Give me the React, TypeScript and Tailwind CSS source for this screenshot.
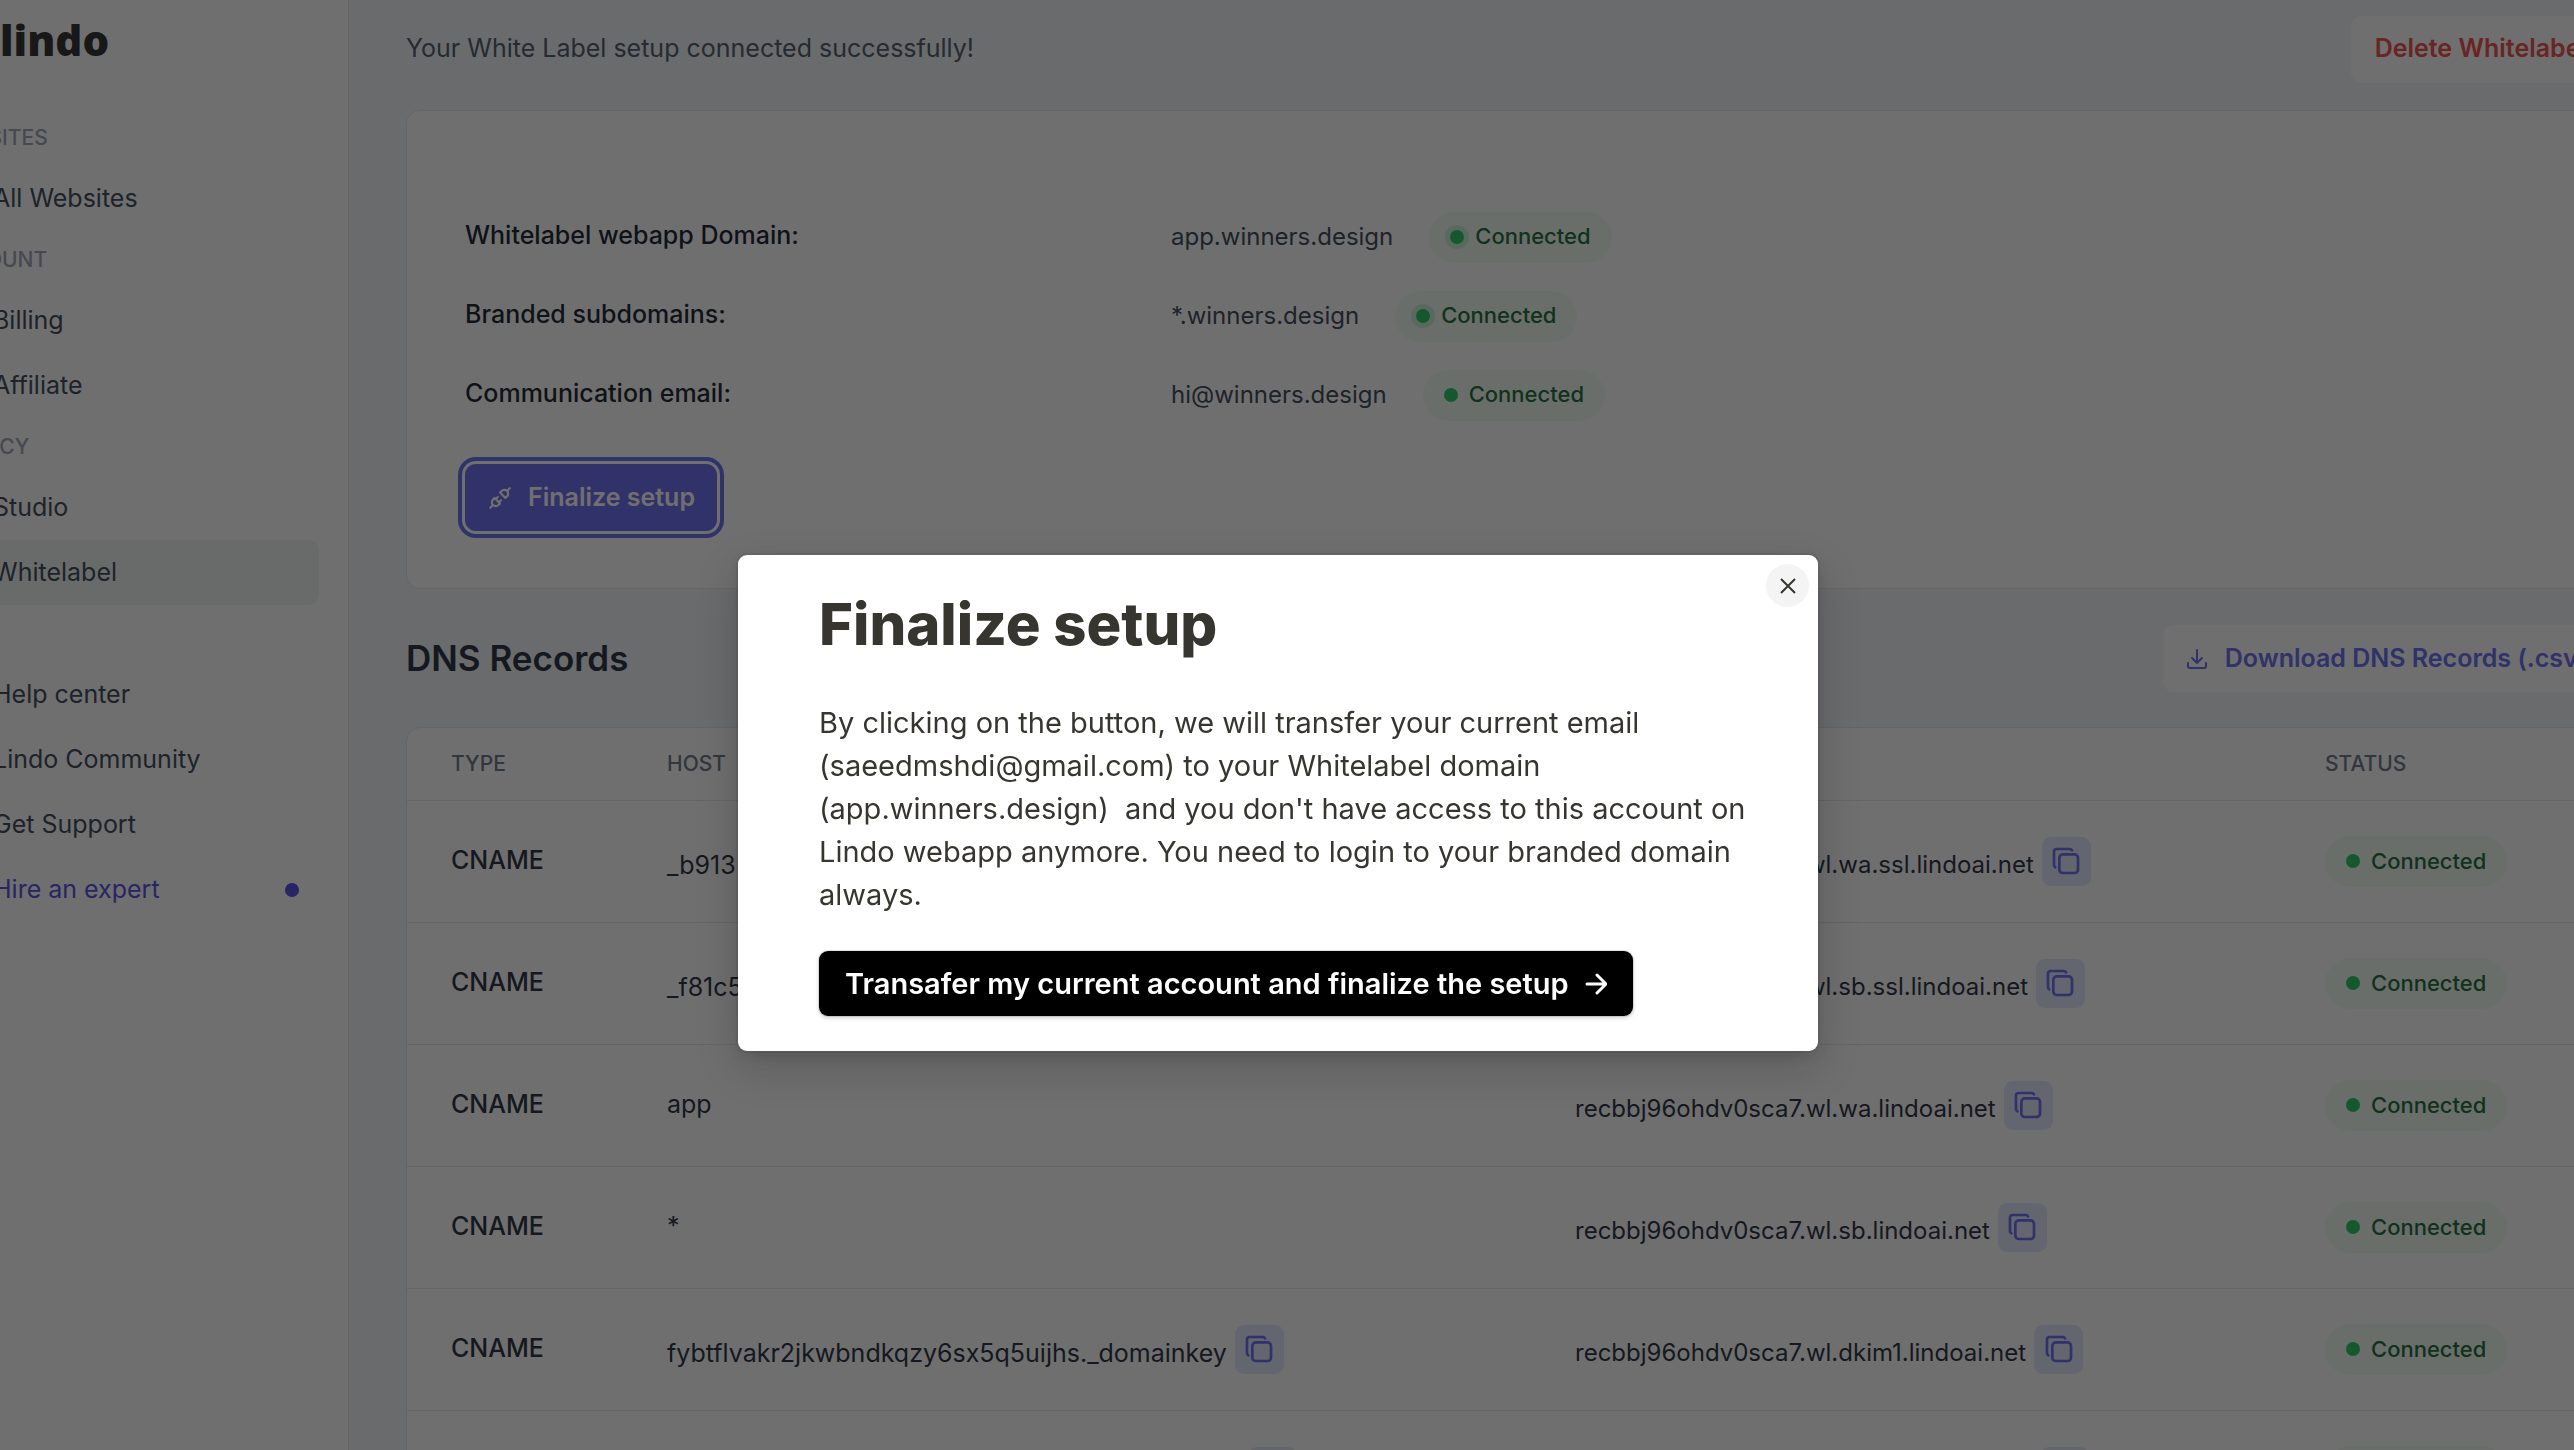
import { TbCopy, TbPlugConnected } from "react-icons/tb";

type NavItem = {
  label: string;
  active?: boolean;
  highlight?: boolean;
};

type NavGroup = {
  title?: string;
  items: NavItem[];
};

type DnsRecord = {
  type: string;
  host: string;
  value: string;
  copyHost?: boolean;
};

const navGroups: NavGroup[] = [
  { title: "Websites", items: [{ label: "All Websites" }] },
  { title: "Account", items: [{ label: "Billing" }, { label: "Affiliate" }] },
  {
    title: "Agency",
    items: [{ label: "Studio" }, { label: "Whitelabel", active: true }],
  },
  {
    items: [
      { label: "Help center" },
      { label: "Lindo Community" },
      { label: "Get Support" },
      { label: "Hire an expert", highlight: true },
    ],
  },
];

const domains = [
  { label: "Whitelabel webapp Domain:", value: "app.winners.design", pulse: true },
  { label: "Branded subdomains:", value: "*.winners.design", pulse: true },
  { label: "Communication email:", value: "hi@winners.design", pulse: false },
];

const records: DnsRecord[] = [
  {
    type: "CNAME",
    host: "_b913",
    value: "recbbj96ohdv0sca7.wl.wa.ssl.lindoai.net",
    copyHost: true,
  },
  {
    type: "CNAME",
    host: "_f81c5",
    value: "recbbj96ohdv0sca7.wl.sb.ssl.lindoai.net",
    copyHost: true,
  },
  { type: "CNAME", host: "app", value: "recbbj96ohdv0sca7.wl.wa.lindoai.net" },
  { type: "CNAME", host: "*", value: "recbbj96ohdv0sca7.wl.sb.lindoai.net" },
  {
    type: "CNAME",
    host: "fybtflvakr2jkwbndkqzy6sx5q5uijhs._domainkey",
    value: "recbbj96ohdv0sca7.wl.dkim1.lindoai.net",
    copyHost: true,
  },
  {
    type: "CNAME",
    host: "hw4btqzn2xkdcg6yoev3ap5rm7qhs._domainkey",
    value: "recbbj96ohdv0sca7.wl.dkim2.lindoai.net",
    copyHost: true,
  },
];

function StatusBadge({ pulse = false }: { pulse?: boolean }) {
  return (
    <span className="inline-flex h-[51px] items-center gap-[11px] rounded-full bg-[#f0fdf4] px-[21px] align-middle text-[22px] font-medium text-[#166534]">
      <span
        className={`size-[14px] rounded-full bg-[#22c55e] ${
          pulse ? "ring-[5px] ring-[#22c55e]/20" : ""
        }`}
      />
      Connected
    </span>
  );
}

function CopyCell({ text }: { text: string }) {
  return (
    <div className="flex items-end gap-2 leading-[42px]">
      {text}
      <button
        type="button"
        aria-label={`Copy ${text}`}
        className="flex size-[49px] items-center justify-center rounded-[9px] bg-[#e0e7ff] text-[#6366f1]"
      >
        <TbCopy className="size-8" />
      </button>
    </div>
  );
}

function DownloadIcon() {
  return (
    <svg
      viewBox="0 0 20 20"
      className="size-5"
      fill="none"
      stroke="currentColor"
      strokeWidth="2"
      strokeLinecap="round"
      strokeLinejoin="round"
    >
      <path d="M10 1v13M5 9l5 5 5-5M1 14v3a2 2 0 0 0 2 2h14a2 2 0 0 0 2-2v-3" />
    </svg>
  );
}

function Sidebar() {
  return (
    <aside className="-ml-20 w-[429px] shrink-0 border-r border-gray-200 bg-white">
      <div className="h-[109px] pl-20 font-['Open_Sans',sans-serif] text-[42px] leading-[80px] font-extrabold text-[#262626]">
        lindo
      </div>
      <nav>
        {navGroups.map((group, index) => (
          <section key={index}>
            <h2 className="flex h-[57px] items-center pl-[21px] text-[21px] font-medium text-gray-400 uppercase">
              {group.title}
            </h2>
            {group.items.map((item) => (
              <a
                key={item.label}
                href="#"
                className={`mr-[29px] flex h-[65px] items-center justify-between rounded-[11px] pr-5 pl-[73px] text-[25px] ${
                  item.active ? "bg-[#eef4f0]" : ""
                } ${item.highlight ? "text-[#4f46e5]" : "text-gray-700"}`}
              >
                {item.label}
                {item.highlight ? (
                  <span className="size-[14px] rounded-full bg-[#4f46e5]" />
                ) : null}
              </a>
            ))}
          </section>
        ))}
      </nav>
    </aside>
  );
}

function SetupCard() {
  return (
    <section className="mt-[27px] rounded-[14px] border border-gray-200 bg-white px-[58px] pt-[85px] pb-[57px]">
      <dl>
        {domains.map((domain) => (
          <div key={domain.label} className="flex h-[79px] items-center">
            <dt className="w-[706px] text-[25px] font-medium text-gray-900">
              {domain.label}
            </dt>
            <dd className="flex items-center gap-9 pt-[3px] text-2xl text-gray-700">
              {domain.value}
              <StatusBadge pulse={domain.pulse} />
            </dd>
          </div>
        ))}
      </dl>
      <button
        type="button"
        className="mt-[31px] flex h-[67px] items-center gap-[15px] rounded-[11px] bg-[#6366f1] px-[22px] text-[25px] font-semibold text-white ring-4 ring-[#6366f1] ring-offset-[3px]"
      >
        <TbPlugConnected className="size-[26px]" />
        Finalize setup
      </button>
    </section>
  );
}

function DnsTable() {
  return (
    <div className="mt-[35px] overflow-hidden rounded-[14px] border border-gray-200 bg-white">
      <table className="w-full table-fixed text-left text-[25px] text-gray-800">
        <thead>
          <tr className="h-[72px] text-[21px] text-gray-500 uppercase">
            <th className="w-[260px] pl-11 font-medium">Type</th>
            <th className="w-[908px] font-medium">Host</th>
            <th className="w-[750px] font-medium">Value</th>
            <th className="font-medium">Status</th>
          </tr>
        </thead>
        <tbody>
          {records.map((record) => (
            <tr key={record.value} className="h-[122px] border-t border-gray-200">
              <td className="pl-11 font-medium">{record.type}</td>
              <td>
                {record.copyHost ? <CopyCell text={record.host} /> : record.host}
              </td>
              <td className="text-2xl">
                <CopyCell text={record.value} />
              </td>
              <td>
                <StatusBadge />
              </td>
            </tr>
          ))}
        </tbody>
      </table>
    </div>
  );
}

function FinalizeDialog() {
  return (
    <div className="fixed inset-0 flex items-start justify-center bg-[#0f0f0f]/60 pt-[555px] pr-[18px]">
      <div
        role="dialog"
        aria-modal="true"
        aria-labelledby="finalize-title"
        className="relative w-[1080px] rounded-[9px] bg-white pt-[34px] pr-[60px] pb-[35px] pl-[81px] text-[#37352f] shadow-[0_0_0_2px_rgba(15,15,15,0.05),0_5px_11px_rgba(15,15,15,0.1),0_16px_43px_rgba(15,15,15,0.2)]"
      >
        <button
          type="button"
          aria-label="Close"
          className="absolute top-[9px] right-[9px] flex size-[43px] items-center justify-center rounded-full bg-[#f4f4f4]"
        >
          <svg viewBox="0 0 16 16" className="size-4" fill="none" stroke="currentColor" strokeWidth="2">
            <path d="M1 1l14 14M15 1L1 15" />
          </svg>
        </button>
        <h1 id="finalize-title" className="text-[58px] leading-[70px] font-extrabold">
          Finalize setup
        </h1>
        <p className="mt-[42px] text-[29px] leading-[43px] whitespace-pre-wrap">
          {
            "By clicking on the button, we will transfer your current email (saeedmshdi@gmail.com) to your Whitelabel domain (app.winners.design)  and you don't have access to this account on Lindo webapp anymore. You need to login to your branded domain always."
          }
        </p>
        <button
          type="button"
          className="mt-[35px] flex h-[65px] items-center gap-4 rounded-[9px] bg-black px-[26px] text-[29px] font-semibold text-white shadow-[0_0_0_1px_rgba(15,15,15,0.1),0_2px_4px_rgba(15,15,15,0.2)]"
        >
          Transafer my current account and finalize the setup
          <svg
            viewBox="0 0 22 22"
            className="size-[22px]"
            fill="none"
            stroke="currentColor"
            strokeWidth="3"
            strokeLinecap="round"
            strokeLinejoin="round"
          >
            <path d="M2 11h18M12 2l9 9-9 9" />
          </svg>
        </button>
      </div>
    </div>
  );
}

export default function App() {
  return (
    <div className="flex h-screen overflow-hidden bg-[#f2f4f8] font-['Inter','Liberation_Sans',sans-serif]">
      <Sidebar />
      <main className="-mr-[37px] min-w-0 flex-1 pt-[15px] pl-[57px]">
        <header className="flex h-[68px] items-center justify-between">
          <p className="text-[25px] text-gray-600">
            Your White Label setup connected successfully!
          </p>
          <button
            type="button"
            className="h-[67px] rounded-[11px] bg-white px-6 text-[25px] font-semibold text-[#ef4444]"
          >
            Delete Whitelabel
          </button>
        </header>
        <SetupCard />
        <div className="mt-9 flex items-center justify-between">
          <h2 className="text-[35px] font-semibold text-gray-800">DNS Records</h2>
          <button
            type="button"
            className="flex h-[67px] items-center gap-[18px] rounded-[11px] bg-white px-6 text-[25px] font-semibold text-[#6366f1]"
          >
            <DownloadIcon />
            Download DNS Records (.csv)
          </button>
        </div>
        <DnsTable />
      </main>
      <FinalizeDialog />
    </div>
  );
}
